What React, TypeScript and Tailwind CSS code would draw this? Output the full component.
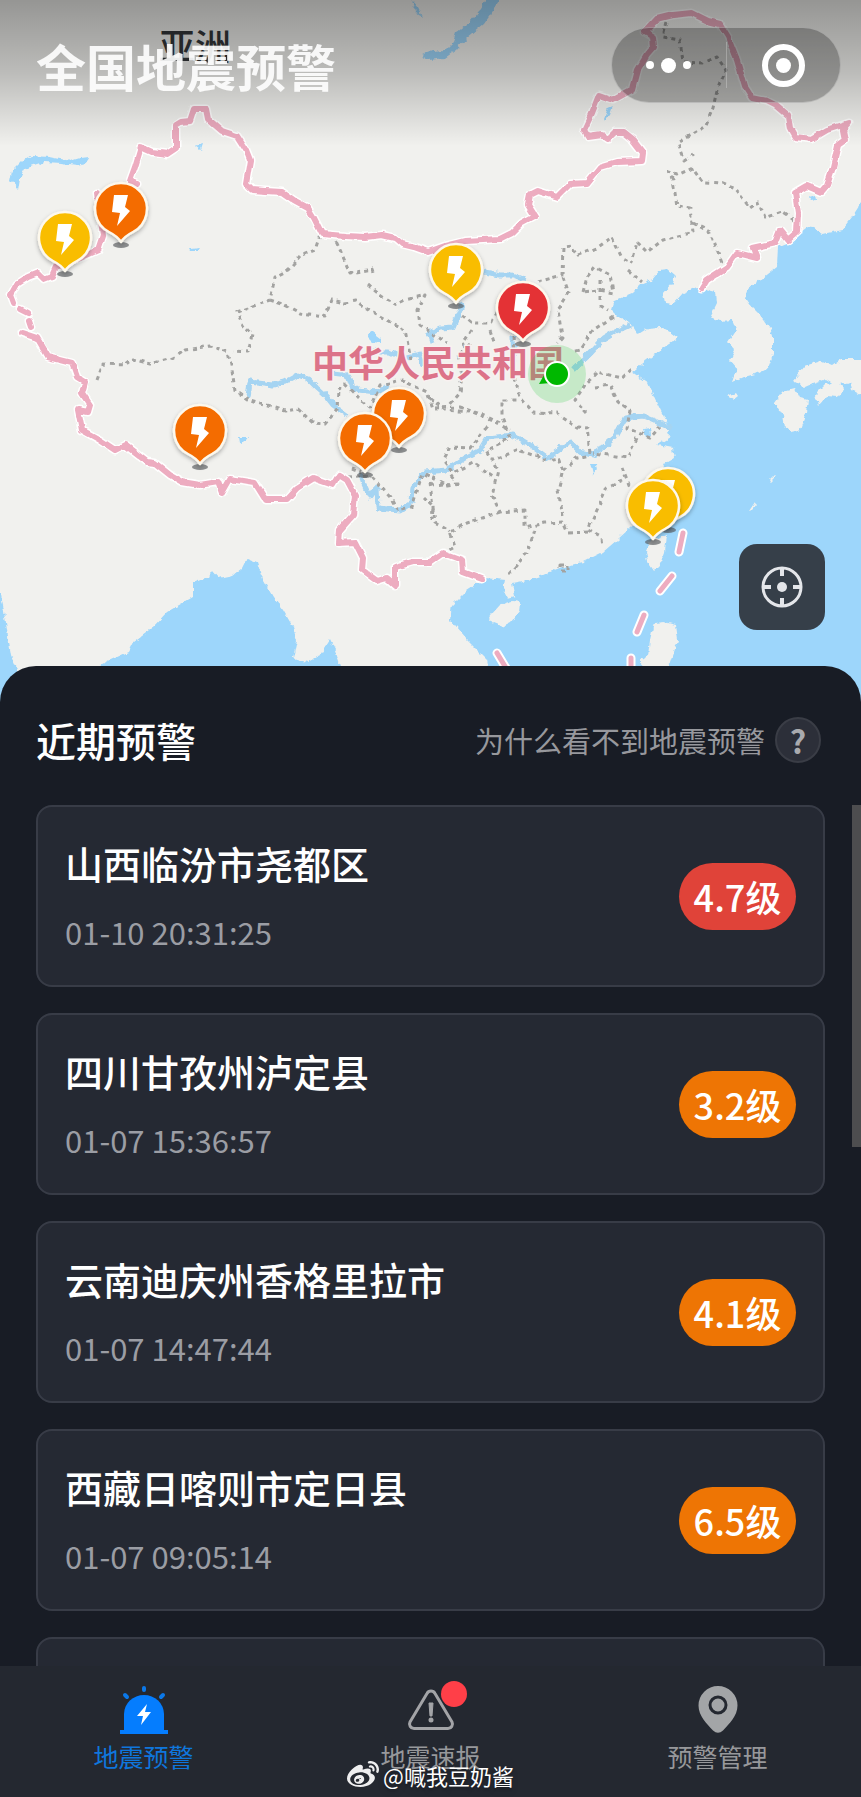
import { FaWeibo } from 'react-icons/fa';

type Level = 'red' | 'orange' | 'yellow';

interface Warning {
  place: string;
  time: string;
  magnitude: string;
  level: Level;
}

const WARNINGS: Warning[] = [
  { place: '山西临汾市尧都区', time: '01-10 20:31:25', magnitude: '4.7级', level: 'red' },
  { place: '四川甘孜州泸定县', time: '01-07 15:36:57', magnitude: '3.2级', level: 'orange' },
  { place: '云南迪庆州香格里拉市', time: '01-07 14:47:44', magnitude: '4.1级', level: 'orange' },
  { place: '西藏日喀则市定日县', time: '01-07 09:05:14', magnitude: '6.5级', level: 'orange' }
];

const PIN_COLORS: Record<Level, string> = { red: '#e43236', orange: '#f46c00', yellow: '#f9bd00' };

// Later pins are drawn over earlier ones.
const PINS: { x: number; y: number; level: Level }[] = [
  { x: 121, y: 209, level: 'orange' },
  { x: 65, y: 238, level: 'yellow' },
  { x: 456, y: 270, level: 'yellow' },
  { x: 523, y: 308, level: 'red' },
  { x: 399, y: 414, level: 'orange' },
  { x: 365, y: 439, level: 'orange' },
  { x: 200, y: 431, level: 'orange' },
  { x: 668, y: 494, level: 'yellow' },
  { x: 653, y: 506, level: 'yellow' }
];

const SEAS = [
  // East and South China Sea, Bohai, Sea of Japan
  'M880 190 861 203 852 217 842 230 822 234 813 228 805 227 795 235 788 243 778 247 777 267 763 278 748 288 745 297 752 307 760 315 770 328 773 337 773 355 768 368 758 373 743 377 732 382 737 368 730 360 735 350 728 342 736 330 732 320 720 321 710 317 717 303 716 292 697 287 683 293 672 305 665 304 663 293 672 283 675 275 668 269 660 270 652 280 640 285 632 293 615 300 612 310 620 318 630 323 637 335 648 328 660 327 670 332 678 338 663 348 647 360 632 372 648 383 657 403 668 425 670 437 657 445 673 448 675 458 663 465 667 473 660 495 643 517 630 528 617 540 603 552 583 562 563 567 543 575 527 580 512 583 515 597 508 599 503 590 505 580 485 578 467 590 452 605 450 620 467 640 487 660 500 730 880 730Z',
  // Bay of Bengal
  'M102 664 128 652 133 642 153 627 167 612 193 597 193 583 208 577 212 571 218 578 233 575 242 568 247 558 257 562 263 580 273 597 283 610 293 627 297 640 293 658 307 662 320 655 330 640 335 650 340 665 345 730 90 730Z',
  'M-20 585 0 588 3 605 7 630 11 655 18 672 20 730-20 730Z'
];

const ISLANDS = [
  'M490 616 500 605 513 601 521 602 520 611 511 623 503 627 493 623 489 618Z',
  'M650 541 667 534 665 552 660 565 654 571 648 562 646 550Z',
  'M793 381 805 366 820 361 832 366 842 359 880 359 880 395 861 395 852 390 850 382 836 385 826 379 814 383 805 387Z',
  'M815 395 826 384 838 381 844 388 838 397 827 396 818 406Z',
  'M775 402 783 391 795 388 800 398 808 400 806 413 800 430 792 433 785 428 783 416Z',
  'M728 397 736 393 738 396 733 400Z',
  'M654 623 664 622 676 625 678 640 673 655 668 670 672 730 644 730 641 660 648 655 650 640Z',
  'M749 511 755 502 757 504 752 510Z',
  'M769 481 775 475 775 478 770 483Z'
];

const RIVERS = [
  'M248 397 250 382 273 385 285 382 298 375 308 379 317 388 326 396 333 405 347 415',
  'M360 472 362 480 370 497 377 487 378 508 388 509 400 510 412 502 413 487 425 472 447 470 465 458 480 450 487 438 513 435 530 445 548 458 559 450 570 442 580 452 592 455 605 446 615 437 625 418 643 416 655 421 670 428',
  'M332 373 348 375 352 386 358 390 377 392 390 386',
  'M370 352 390 352 402 358 420 354 424 366',
  'M433 343 430 333 441 328 453 327 458 315 463 303',
  'M485 272 500 275 512 275 525 280',
  'M513 336 514 372',
  'M573 370 590 353 603 339 613 333 630 325'
];

const LAKES = [
  'M422 55 432 51 445 50 453 42 456 33 470 22 480 10 486 0 490-10 505-10 500 0 495 8 484 24 467 38 456 50 445 58 430 60Z',
  'M10 181 12 171 22 161 31 156 50 157 70 161 80 158 88 157 86 163 77 165 62 163 45 162 33 166 25 169 20 178 18 190Z',
  'M367 336 373 332 381 338 381 343 373 342Z',
  'M604 118 608 108 613 106 610 115 605 120Z',
  'M808 196 815 194 816 199 811 200Z',
  'M239 437 249 437 247 440 240 443Z',
  'M643 428 650 427 651 436 645 437Z',
  'M590 463 597 463 598 469 593 475Z',
  'M195 146 202 144 200 150Z',
  'M190 249 200 248 198 251 191 251Z',
  'M411 0 418 8 422 16 416 12Z',
  'M424 53 430 51 430 58Z'
];

const BORDERS = [
  'M14 303 11 295 17 284 28 277 38 273 44 279 52 276 56 267 80 258 98 250 103 235 98 200 97 193M136 184 130 181 135 167 141 147 152 152 167 154 176 148 176 125 181 122 190 121 194 109 206 109 208 119 222 131 237 136 246 150 250 160 248 172 246 184 252 190 265 191 282 192 295 201 308 208 314 218 322 234 345 236 365 237 382 235 395 238 402 244 414 247 428 252 445 246 465 241 483 240 500 239 512 233 522 223 535 216 528 205 530 195 538 191 557 197 570 184 587 183 600 167 617 162 642 161 643 153 633 140 623 132 615 132 608 139 602 135 588 137 584 130 592 113 599 95 613 100 633 89 638 70 647 55 654 47 653 37 645 32 657 19 673 15 692 13 708 21 720 24 728 37 737 60 745 87 752 98 767 101 775 105 788 116 790 128 795 137 812 139 827 130 849 123 843 130 845 140 838 145 833 167 827 185 821 192 807 186 795 193 798 213 797 232 788 240 780 230 775 243 753 248 757 258 737 253 727 267 707 280 702 288',
  'M22 333 37 338 48 357 72 363 77 377 85 382 82 393 90 405 88 412 78 410 82 430 100 440 115 450 125 445 147 462 155 463 170 475 182 482 200 485 218 482 222 493 230 479 255 483 265 499 287 499 297 488 313 478 333 485 339 475 347 480 355 495 353 515 340 530 339 543 355 542 363 558 362 570 377 581 387 578 395 585 395 567 413 562 430 562 443 553 462 560 463 572 482 579',
  'M28 313 20 309M31 327 29 321'
];

const SEA_BORDERS = ['M679 552 683 533', 'M660 591 672 576', 'M637 632 644 615', 'M497 653 509 673', 'M631 658 631 673'];

const PROVINCES = [
  'M320 235 315 250 300 256 288 270 275 277 270 300 237 312 243 325 252 335 248 352 233 351',
  'M270 300 285 305 300 313 325 316 332 300 345 303 355 301 375 313 390 322 405 330 408 345 411 360',
  'M333 235 341 252 350 273 373 269 375 275 M368 285 380 295 395 305 405 300 425 295 418 310 420 325 447 343',
  'M97 380 103 364 125 365 133 359 150 364 172 358 185 350 210 346 228 352 232 370 235 390 250 401 285 411 298 409 313 423 325 424 337 410 338 390 345 384 360 400 370 407 380 385 402 380 412 385 427 392 433 408 460 407 483 415 500 423',
  'M462 315 472 323 492 323 497 310M472 330 463 343 470 353 462 373 460 393 448 407',
  'M513 337 515 380 520 397 533 412 557 413 578 427 587 428 590 453',
  'M587 413 575 400 585 385 597 372 622 378 633 368',
  'M538 282 562 275 563 247 571 246 578 255 597 248 612 237 622 258 632 263 637 242 647 252 663 240 693 232 690 208 677 206 673 180 668 172 677 175 693 168 703 182 722 183 735 188 750 208 758 202 765 218 782 212 797 222',
  'M667 22 663 37 680 40 683 62 703 63 717 57 726 70 717 90 713 108 705 127 678 143 685 160 693 155',
  'M693 223 710 232 722 263M628 270 642 282',
  'M583 292 587 277 595 267 610 275 613 293 600 290 583 292M600 280 600 305 608 310',
  'M563 277 569 293 558 310 562 337 557 343M613 317 593 330 580 350 573 352',
  'M595 387 610 385 618 402 630 410 627 428 650 438 660 427M637 438 627 458 610 455 593 453M622 467 630 487',
  'M622 480 607 487 597 510 588 530 602 538 603 546M588 532 568 533 563 522 545 523 525 528 525 510 500 512 492 495 498 470 487 450 510 438 502 417 502 400 518 400',
  'M563 517 558 490 563 470 577 458 590 455M498 458 518 450 547 460 558 458 563 470',
  'M535 530 527 553 508 575M500 512 467 523 450 532 455 547 443 553M430 483 435 523 450 532',
  'M430 398 445 410 470 412 490 420 510 430M487 427 470 448 450 447 443 460 453 473 473 463 493 477M430 485 457 483 450 473',
  'M348 477 370 475 390 497 397 510 412 507 423 473 447 485 460 483M423 497 433 507 432 520M352 468 362 472',
  'M470 345 458 355 461 372M490 330 495 345M560 566 568 566 568 571 560 571Z'
];

function Pin({ x, y, level }: { x: number; y: number; level: Level }) {
  return (
    <g transform={`translate(${x} ${y})`}>
      <ellipse cx="0" cy="36" rx="8" ry="3" fill="#55585a" opacity="0.65" />
      <path
        d="M0 33 C-3 28-6 26-12 23 A26 26 0 1 1 12 23 C6 26 3 28 0 33Z"
        fill={PIN_COLORS[level]}
        stroke="#fdf8ec"
        strokeWidth="2.5"
        strokeLinejoin="round"
        filter="url(#pin-shadow)"
      />
      <path d="M-7-14 7-14 4-2 9 2-4 17-1 4-9 3Z" fill="#fff" />
    </g>
  );
}

function WarningMap() {
  return (
    <svg
      className="block h-full w-full bg-[#f1f1ee]"
      viewBox="0 0 861 710"
      preserveAspectRatio="xMidYMin slice"
      role="img"
      aria-label="全国地震预警地图"
    >
      <defs>
        <filter id="rough" x="-20" y="-20" width="901" height="750" filterUnits="userSpaceOnUse">
          <feTurbulence type="fractalNoise" baseFrequency="0.16" numOctaves="2" seed="4" />
          <feDisplacementMap in="SourceGraphic" scale="6" xChannelSelector="R" yChannelSelector="G" />
        </filter>
        <filter id="wavy" x="-20" y="-20" width="901" height="750" filterUnits="userSpaceOnUse">
          <feTurbulence type="fractalNoise" baseFrequency="0.1" numOctaves="1" seed="4" />
          <feDisplacementMap in="SourceGraphic" scale="5" xChannelSelector="R" yChannelSelector="G" />
        </filter>
        <filter id="pin-shadow" x="-50%" y="-50%" width="200%" height="200%">
          <feDropShadow dx="0" dy="2" stdDeviation="2" floodColor="#000" floodOpacity="0.3" />
        </filter>
        <linearGradient id="top-shade" x1="0" y1="0" x2="0" y2="1">
          <stop offset="0" stopColor="#000" stopOpacity="0.38" />
          <stop offset="0.5" stopColor="#000" stopOpacity="0.22" />
          <stop offset="1" stopColor="#000" stopOpacity="0" />
        </linearGradient>
      </defs>

      <g filter="url(#rough)">
        <path d={SEAS.join('')} fill="#9dd6fb" />
        <path d={ISLANDS.join('')} fill="#f1f1ee" />
        <path d={LAKES.join('')} fill="#9dd6fb" />
        <path d={RIVERS.join('')} fill="none" stroke="#a5d4f2" strokeWidth="5" strokeLinejoin="round" />
      </g>
      <path
        d={PROVINCES.join('')}
        fill="none"
        stroke="#a3a3a1"
        strokeWidth="3"
        strokeDasharray="4 4"
        strokeLinejoin="round"
        filter="url(#wavy)"
      />
      <g fill="none" strokeLinecap="round" strokeLinejoin="round" filter="url(#wavy)">
        <path d={BORDERS.join('')} stroke="#fff" strokeWidth="9" />
        <path d={BORDERS.join('')} stroke="#edacc0" strokeWidth="6" />
      </g>
      <g fill="none" strokeLinecap="round">
        <path d={SEA_BORDERS.join('')} stroke="#fff" strokeWidth="9" />
        <path d={SEA_BORDERS.join('')} stroke="#edacc0" strokeWidth="5" />
      </g>

      <text x="159" y="60" className="text-[36px] font-medium" fill="#333639">
        亚洲
      </text>
      <text
        x="312"
        y="377"
        className="text-[36px] font-bold"
        fill="#dc7389"
        stroke="#f8f1f0"
        strokeWidth="3"
        paintOrder="stroke"
      >
        中华人民共和国
      </text>

      {PINS.map((pin) => (
        <Pin key={`${pin.x}-${pin.y}`} {...pin} />
      ))}

      <circle cx="557" cy="374" r="29" fill="#2fcf45" opacity="0.22" />
      <path d="M539 384 544 375 551 383Z" fill="#00b800" />
      <circle cx="557" cy="374" r="12" fill="#00b800" stroke="#fff" strokeWidth="2" />

      <rect width="861" height="146" fill="url(#top-shade)" />
    </svg>
  );
}

function Capsule() {
  return (
    <div className="flex h-[76px] w-[230px] items-center rounded-full border border-white/30 bg-black/25">
      <button type="button" aria-label="更多" className="flex h-full flex-1 items-center justify-center gap-[7px]">
        <span className="size-2 rounded-full bg-white" />
        <span className="size-[15px] rounded-full bg-white" />
        <span className="size-2 rounded-full bg-white" />
      </button>
      <span className="h-[46px] w-px bg-white/25" />
      <button type="button" aria-label="关闭" className="flex h-full flex-1 items-center justify-center">
        <span className="flex size-[43px] items-center justify-center rounded-full border-[6px] border-white">
          <span className="size-[15px] rounded-full bg-white" />
        </span>
      </button>
    </div>
  );
}

function LocateIcon() {
  return (
    <svg className="size-[42px]" viewBox="0 0 42 42" fill="none" stroke="#e4e6ea" strokeWidth="3">
      <circle cx="21" cy="21" r="19" />
      <path d="M21 2v8M21 32v8M2 21h8M32 21h8" strokeWidth="4" />
      <circle cx="21" cy="21" r="5" fill="#e4e6ea" stroke="none" />
    </svg>
  );
}

function WarningCard({ place, time, magnitude, level }: Warning) {
  return (
    <li className="flex h-[182px] shrink-0 items-center justify-between rounded-2xl border-2 border-[#383c47] bg-[#252933] px-[27px]">
      <div>
        <h3 className="text-[38px] leading-[54px] font-medium text-white">{place}</h3>
        <p className="mt-[18px] text-[31px] leading-[48px] text-[#9b9da4]">{time}</p>
      </div>
      <span
        className={`flex h-[67px] w-[117px] items-center justify-center rounded-full text-[36px] font-medium text-white ${
          level === 'red' ? 'bg-[#e04339]' : 'bg-[#ee7504]'
        }`}
      >
        {magnitude}
      </span>
    </li>
  );
}

function SirenIcon() {
  return (
    <svg className="size-12" viewBox="0 0 48 48" fill="#057dfe">
      <path d="M4 45V28a20 19 0 0 1 40 0V45Z" />
      <rect y="44" width="48" height="4" />
      <g stroke="#0b78e8" strokeWidth="4" strokeLinecap="round">
        <path d="M24 2v2M5 9l2 2M43 9l-2 2" />
      </g>
      <path d="M27 18 17 30h6l-2 9 10-13h-6l2-8Z" fill="#fff" />
    </svg>
  );
}

function AlertIcon() {
  return (
    <svg className="size-12" viewBox="0 0 48 48" fill="none" stroke="#a3a4a7" strokeWidth="3" strokeLinejoin="round">
      <path d="M20 7.5a4.500 4.500 0 0 1 8 0L45 36a4.500 4.500 0 0 1-4 6.500H7A4.500 4.500 0 0 1 3 36Z" />
      <path d="M22 17h4l-1 13h-2Z" fill="#a3a4a7" strokeWidth="1" />
      <circle cx="24" cy="34" r="2.500" fill="#a3a4a7" stroke="none" />
    </svg>
  );
}

function PlaceIcon() {
  return (
    <svg className="size-12" viewBox="0 0 48 48">
      <path d="M24 0A19.500 19.500 0 0 0 4.500 19.500C4.500 30 13 38 19 44.500Q24 49 29 44.500C35 38 43.500 30 43.500 19.500A19.500 19.500 0 0 0 24 0Z" fill="#a3a5a7" />
      <circle cx="24" cy="19" r="8" fill="#a3a5a7" stroke="#242830" strokeWidth="3" />
    </svg>
  );
}

function TabBar() {
  return (
    <nav className="relative h-[131px] shrink-0 bg-[#242830] pt-[20px] text-[25px] leading-[36px] text-[#97989b]">
      <div className="grid grid-cols-3">
        <a href="#warning" aria-current="page" className="flex flex-col items-center gap-1 text-[#0f76dc]">
          <SirenIcon />
          地震预警
        </a>
        <a href="#report" className="flex flex-col items-center gap-1">
          <span className="relative">
            <AlertIcon />
            <span className="absolute -top-[5px] -right-3 size-[26px] rounded-full bg-[#ff3f48]" />
          </span>
          地震速报
        </a>
        <a href="#manage" className="flex flex-col items-center gap-1">
          <PlaceIcon />
          预警管理
        </a>
      </div>
      <p className="pointer-events-none absolute inset-x-0 bottom-[6px] flex items-center justify-center gap-1 text-[22px] leading-[32px] text-white text-shadow-lg">
        <FaWeibo className="size-8 text-[#eeeeef]" />
        @喊我豆奶酱
      </p>
    </nav>
  );
}

export default function App() {
  return (
    <main className="flex h-screen flex-col overflow-hidden bg-[#181c25] font-['Noto_Sans_CJK_SC',sans-serif]">
      <section className="relative h-[710px] shrink-0">
        <WarningMap />
        <header className="absolute inset-x-0 top-[27px] flex items-center justify-between pr-5 pl-9">
          <h1 className="text-[50px] leading-[76px] font-bold text-white/90">全国地震预警</h1>
          <Capsule />
        </header>
        <button
          type="button"
          aria-label="定位"
          className="absolute right-9 bottom-[80px] flex size-[86px] items-center justify-center rounded-[18px] bg-[#363f49]"
        >
          <LocateIcon />
        </button>
      </section>

      <section className="relative -mt-11 flex min-h-0 flex-1 flex-col rounded-t-[36px] bg-[#181c25]">
        <div className="flex h-[139px] shrink-0 items-center justify-between pt-2 pr-10 pl-9">
          <h2 className="text-[40px] leading-[60px] font-medium text-white">近期预警</h2>
          <button type="button" className="flex items-center gap-[10px] text-[29px] leading-[46px] text-[#97989d]">
            为什么看不到地震预警
            <span className="flex size-[46px] items-center justify-center rounded-full border-2 border-[#3a3d46] bg-[#2c2f39] text-[32px] font-bold text-[#a9aaae]">
              ?
            </span>
          </button>
        </div>
        <div className="relative min-h-0 flex-1 overflow-hidden">
          <ul className="flex flex-col gap-[26px] px-9">
            {WARNINGS.map((warning) => (
              <WarningCard key={warning.time} {...warning} />
            ))}
            <li aria-hidden="true" className="h-[182px] shrink-0 rounded-2xl border-2 border-[#383c47] bg-[#252933]" />
          </ul>
          <span className="absolute top-0 right-0 h-[342px] w-[9px] bg-[#4d4d4f]" />
        </div>
      </section>

      <TabBar />
    </main>
  );
}
